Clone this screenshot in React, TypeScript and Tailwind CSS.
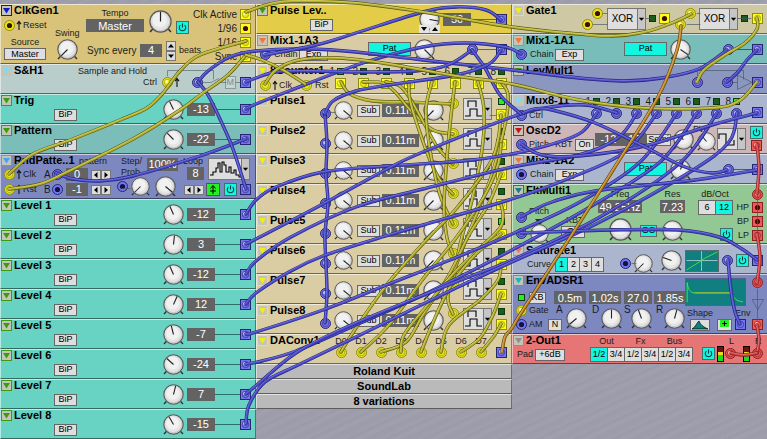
import type { ReactNode } from "react";
import clsx from "clsx";

type Point = [number, number];
type Tone = "yellow" | "blue" | "red";

const JACK = {
    yellow: { fill: "#e9e61a", edge: "#8f8d10", ring: "#ffff12", hole: "#3f0d0d", shine: "#fbfaa8" },
    blue: { fill: "#7474f2", edge: "#26266e", ring: "#7474f2", hole: "#12123c", shine: "#c3c3ff" },
    red: { fill: "#ea5555", edge: "#8c1f1f", ring: "#ee5a5a", hole: "#3f0d0d", shine: "#ffc0c0" },
};

function Jack({ tone = "blue", round, open, className }: { tone?: Tone; round?: boolean; open?: boolean; className?: string }) {
    const c = JACK[tone];
    return (
        <svg viewBox="0 0 11 11" className={clsx("size-[11px] shrink-0 overflow-visible", className)}>
            {round ? (
                <circle cx="5.5" cy="5.5" r="5" fill={c.fill} stroke={c.edge} />
            ) : (
                <rect x="0.5" y="0.5" width="10" height="10" fill={c.ring} stroke={c.edge} />
            )}
            {open ? (
                <circle cx="5.5" cy="5.5" r="2.6" fill={c.hole} />
            ) : (
                <>
                    <circle cx="5.5" cy="5.5" r="3.2" fill={c.fill} stroke={c.edge} strokeWidth="0.6" />
                    <circle cx="4.6" cy="4.6" r="1.5" fill={c.shine} />
                </>
            )}
        </svg>
    );
}

function Knob({ angle, label, big, small, className }: { angle: number; label: string; big?: boolean; small?: boolean; className?: string }) {
    return (
        <label className={clsx("block shrink-0", big ? "size-[23px]" : small ? "size-[19px]" : "size-[21px]", className)}>
            <input type="range" min={-135} max={135} defaultValue={angle} aria-label={label} className="sr-only" />
            <svg viewBox="0 0 21 21" className="size-full overflow-visible">
                <path d="M3.6 17.2 1 20M17.4 17.2 20 20" stroke="#333" strokeWidth="1.4" />
                <circle cx="10.5" cy="10.5" r="9.7" fill="#c9c9c9" stroke="#5a5856" strokeWidth="1.1" />
                <circle cx="10.2" cy="10" r="8.3" fill="#e4e4e4" />
                <circle cx="9.8" cy="9.2" r="6.4" fill="#f1f1f1" />
                <path d="M10.5 10.5V1.5" stroke="#222" strokeWidth="1.1" transform={`rotate(${angle} 10.5 10.5)`} />
            </svg>
        </label>
    );
}

function Text({ children, className }: { children: ReactNode; className?: string }) {
    return <span className={clsx("shrink-0 text-[9px] leading-[11px] whitespace-nowrap text-[#1c1c1c]", className)}>{children}</span>;
}

function Value({ children, className }: { children: ReactNode; className?: string }) {
    return (
        <output className={clsx("h-[13px] shrink-0 bg-[#636363] text-center text-[11px] leading-[13px] whitespace-nowrap text-white", className)}>
            {children}
        </output>
    );
}

function Btn({ children, on, className }: { children: ReactNode; on?: boolean; className?: string }) {
    return (
        <button
            className={clsx(
                "flex h-3 shrink-0 items-center justify-center border border-[#666] text-[9px] leading-[9px] whitespace-nowrap text-black",
                on ? "bg-[#14f5e0]" : "bg-[#dedede]",
                className,
            )}
        >
            {children}
        </button>
    );
}

function Power({ className }: { className?: string }) {
    return (
        <button aria-label="Bypass" className={clsx("size-[13px] shrink-0 border border-[#3f6f6f] bg-[#14f5e0]", className)}>
            <svg viewBox="0 0 11 11" className="size-[11px]" fill="none" stroke="#063c3c" strokeWidth="1.1">
                <path d="M3.4 3.2a3.2 3.2 0 1 0 4.2 0M5.5 1.5v4" />
            </svg>
        </button>
    );
}

function Arrows({ vertical, className }: { vertical?: boolean; className?: string }) {
    const paths = vertical ? ["M2 6.5h6L5 3z", "M2 3.5h6L5 7z"] : ["M6.5 2v6L3 5z", "M3.5 2v6L7 5z"];
    return (
        <div className={clsx("flex shrink-0", vertical && "flex-col", className)}>
            {paths.map((d, i) => (
                <button key={d} aria-label={i ? "Next" : "Previous"} className="size-[10px] border border-[#777] bg-[#dcdcdc]">
                    <svg viewBox="1 1 8 8" className="size-2"><path d={d} /></svg>
                </button>
            ))}
        </div>
    );
}

function Led({ on, className }: { on?: boolean; className?: string }) {
    return <span className={clsx("size-[7px] shrink-0 border border-[#0c3a0c]", on ? "bg-[#22f022]" : "bg-[#1d5c1d]", className)} />;
}

function UpArrow() {
    return (
        <svg viewBox="0 0 6 11" className="mx-px h-[11px] w-1.5 shrink-0">
            <path d="M3 10V2M1 4.2 3 1.5l2 2.7" fill="none" stroke="#111" strokeWidth="1.1" />
        </svg>
    );
}

function DropArrow({ className }: { className?: string }) {
    return (
        <svg viewBox="0 0 8 20" className={clsx("h-5 w-2 shrink-0 border-l border-[#777] bg-[#c6c6c6]", className)}>
            <path d="M1 8.5h6L4 12z" />
        </svg>
    );
}

function Wave({ d, label, wide }: { d: string; label: string; wide?: boolean }) {
    return (
        <button aria-label={label} className={clsx("flex h-[22px] border border-[#777] bg-[#dedede]", wide ? "w-[42px]" : "w-[29px]")}>
            <svg viewBox={wide ? "0 0 32 20" : "0 0 19 20"} className="h-5 min-w-0 flex-1" fill="none" stroke="#000" strokeWidth="1.1">
                <path d={d} />
            </svg>
            <DropArrow />
        </button>
    );
}

// every direct child is a layer in one grid cell, set off by its own margins
function Module({ title, color, mark, className, children }: { title: string; color: string; mark: string; className?: string; children: ReactNode }) {
    return (
        <section className={clsx("grid border border-t-white/60 border-r-black/40 border-b-black/50 border-l-white/50 *:[grid-area:1/1]", color, className ?? "h-[30px]")}>
            <div className="flex h-3 gap-0.5 self-start">
                <button aria-label={`${title} menu`} className={clsx("size-[11px] shrink-0 border border-current bg-[#c4c4b8]", mark)}>
                    <svg viewBox="0 0 9 9" className="size-[9px]"><path d="M1 2h7L4.5 7.5z" fill="currentColor" /></svg>
                </button>
                <h2 className="text-[11px] leading-[11px] font-bold whitespace-nowrap text-black">{title}</h2>
            </div>
            {children}
        </section>
    );
}

function Row({ className, children }: { className?: string; children: ReactNode }) {
    return <div className={clsx("flex h-[11px] items-center self-start", className)}>{children}</div>;
}

function Level({ name, value, color = "bg-[#68d2c3]" }: { name: string; value: number; color?: string }) {
    return (
        <Module title={name} color={color} mark="text-[#3f9a12]">
            <Row className="mt-3.5 ml-[53px]"><Btn className="w-[23px]">BiP</Btn></Row>
            <Row className="mt-[9px] ml-[162px] pr-1">
                <Knob angle={value * 2} label={name} />
                <Value className="ml-[3px] w-7">{value}</Value>
                <span className="h-px flex-1 bg-[#2c6f68]" />
                <Jack />
            </Row>
        </Module>
    );
}

function Mix({ name, color, angle, open }: { name: string; color: string; angle: number; open?: boolean }) {
    return (
        <Module title={name} color={color} mark="text-[#f2763c]">
            <Row className="mt-3.5 ml-[3px]">
                <Jack round open={open} />
                <Text className="ml-[3px] w-[25px]">Chain</Text>
                <Btn className="w-[29px]">Exp</Btn>
            </Row>
            <Row className="mt-2 ml-[111px]"><Btn on className="h-[14px] w-[43px]">Pat</Btn></Row>
            <Row className="mt-[9px] ml-[157px] pr-1">
                <Knob angle={angle} label={`${name} level`} />
                <Jack round className="ml-8" />
                <span className="h-px flex-1 bg-black/50" />
                <Jack />
            </Row>
        </Module>
    );
}

function Pulse({ n }: { n: number }) {
    return (
        <Module title={`Pulse${n}`} color="bg-[#dbcda3]" mark="text-[#f5ee10]">
            <Row className="mt-[13px] ml-[63px]"><Jack round /></Row>
            <Row className="mt-[10px] ml-[77px]">
                <Knob small angle={130} label={`Pulse ${n} modulation`} />
                <Btn className="ml-1 w-[23px]">Sub</Btn>
                <Value className="ml-0.5 w-[37px]">0.11m</Value>
                <Knob angle={-135} label={`Pulse ${n} time`} className="ml-1" />
            </Row>
            <Row className="mt-[3px] ml-[191px]"><Jack tone="yellow" round /></Row>
            <div className="mt-[3px] ml-[206px] self-start">
                <Wave label="Pulse mode" d="M1 17h5V10h7v7h5M4 8V2h8v6" />
            </div>
            <div className="mt-[3px] flex flex-col items-center gap-1 justify-self-end pr-1">
                <Led on={n === 1 || n === 5} />
                <Jack tone="yellow" />
            </div>
        </Module>
    );
}

function Gate() {
    return (
        <label className="flex h-[22px] w-[39px] shrink-0 border border-[#777] bg-[#dedede]">
            <select aria-label="Gate type" defaultValue="XOR" className="w-[29px] appearance-none text-center text-[10px] leading-5">
                <option>XOR</option>
            </select>
            <DropArrow />
        </label>
    );
}

function Choice({ items, on, width }: { items: string[]; on: number; width: string }) {
    return (
        <div className="flex">
            {items.map((item, i) => (
                <Btn key={item} on={i === on} className={clsx("-mr-px h-[15px]", width)}>{item}</Btn>
            ))}
        </div>
    );
}

function Meter({ className }: { className?: string }) {
    return (
        <div className={clsx("flex h-4 w-[7px] shrink-0 flex-col border border-black bg-[#1cdd1c]", className)}>
            <span className="h-[5px] bg-[#6b1313]" />
            <span className="h-[3px] bg-[#e5df1a]" />
        </div>
    );
}

function EnvCell({ letter, angle, value, width, inset }: { letter: string; angle: number; value: string; width: string; inset: string }) {
    return (
        <div>
            <Value className={clsx("block h-3.5 leading-[14px]", width)}>{value}</Value>
            <div className="flex items-start">
                <Text className={clsx("text-[10px]", inset)}>{letter}</Text>
                <Knob angle={angle} label={`Envelope ${letter}`} className="mt-1" />
            </div>
        </div>
    );
}

function ColumnOne() {
    return (
        <div>
            <Module title="ClkGen1" color="bg-[#d9c37a]" mark="text-[#1414c8]" className="h-[60px]">
                <Row className="mt-[15px] ml-[3px]">
                    <Jack tone="yellow" round open />
                    <UpArrow />
                    <Text>Reset</Text>
                </Row>
                <div className="mt-8 ml-[3px] w-[42px] self-start text-center">
                    <Text className="block">Source</Text>
                    <Btn className="w-full">Master</Btn>
                </div>
                <div className="mt-[23px] ml-[54px] w-6 self-start">
                    <Text className="block">Swing</Text>
                    <Knob angle={-135} label="Swing" className="ml-0.5" />
                </div>
                <div className="mt-[3px] ml-[85px] w-[58px] self-start text-center">
                    <Text className="block">Tempo</Text>
                    <Value className="block h-3.5 leading-[14px]">Master</Value>
                </div>
                <div className="mt-[5px] ml-[148px] flex self-start">
                    <Knob big angle={0} label="Tempo" />
                    <Power className="mt-[11px] ml-1" />
                </div>
                <Row className="mt-10 ml-[86px]">
                    <Text className="w-[53px] text-[10px]">Sync every</Text>
                    <Value className="w-[22px]">4</Value>
                    <Arrows vertical className="ml-1" />
                    <Text className="ml-[3px]">beats</Text>
                </Row>
                <div className="flex flex-col justify-self-end pt-0.5 pr-1">
                    {["Clk Active", "1/96", "1/16", "Sync"].map((name, i) => (
                        <div key={name} className="flex h-3.5 items-center justify-end gap-[3px]">
                            <Text className="text-[10px]">{name}</Text>
                            <Jack tone="yellow" open={i === 1} />
                        </div>
                    ))}
                </div>
            </Module>
            <Module title="S&H1" color="bg-[#b9cdcb]" mark="text-[#7fdcf5]">
                <Row className="mt-px ml-[77px]"><Text>Sample and Hold</Text></Row>
                <Row className="mt-3 ml-[142px] pr-1">
                    <Text className="w-[19px]">Ctrl</Text>
                    <Jack tone="yellow" round />
                    <UpArrow />
                    <Jack round className="ml-[11px]" />
                    <Text className="mr-1 ml-auto border border-[#8b9b9a] bg-[#c6d6d4] px-px text-[8px] leading-[9px] text-[#7d8b8a]">M</Text>
                    <Jack />
                </Row>
            </Module>
            <Level name="Trig" value={-13} />
            <Level name="Pattern" value={-22} color="bg-[#7bbdb9]" />
            <Module title="RndPatte..1" color="bg-[#7d88c1]" mark="text-[#3fa5f0]" className="h-[45px]">
                <Row className="mt-px ml-[78px]"><Text>pattern</Text></Row>
                <Row className="mt-3.5 ml-[3px]">
                    <Jack tone="yellow" round />
                    <UpArrow />
                    <Text className="w-[21px]">Clk</Text>
                    <Text className="w-[8px] text-[10px]">A</Text>
                    <Jack round />
                    <Value className="ml-[3px] w-[22px]">0</Value>
                    <Arrows className="ml-[3px]" />
                </Row>
                <Row className="mt-[29px] ml-[3px]">
                    <Jack tone="yellow" round />
                    <UpArrow />
                    <Text className="w-[21px]">Rst</Text>
                    <Text className="w-[8px] text-[10px]">B</Text>
                    <Jack round open />
                    <Value className="ml-[3px] w-[22px]">-1</Value>
                    <Arrows className="ml-[3px]" />
                </Row>
                <div className="mt-px ml-[120px] w-7 self-start">
                    <Text className="block leading-[9px]">Step/</Text>
                    <Text className="block leading-[9px]">Prob</Text>
                </div>
                <Row className="mt-1 ml-[146px]"><Value className="w-[31px]">100%</Value></Row>
                <Row className="mt-[26px] ml-[116px]">
                    <Jack round open />
                    <Knob small angle={-135} label="Step" className="ml-[3px]" />
                    <Knob angle={130} label="Probability" className="ml-[5px]" />
                </Row>
                <Row className="mt-px ml-[182px]"><Text>Loop</Text></Row>
                <Row className="mt-[13px] ml-[186px]"><Value className="w-[17px]">8</Value></Row>
                <div className="mt-[3px] ml-[207px] self-start">
                    <Wave wide label="Pattern shape" d="M1 16h3v-3h3V9h2V4h2v9h2V3h2v3h2v7h3v-5h2v6h3v-3h2v5h3v2h3" />
                </div>
                <Row className="mt-[29px] ml-[183px] pr-1">
                    <Arrows />
                    <button aria-label="Unipolar" className="ml-0.5 h-[13px] w-3.5 border border-[#555] bg-[#22f022]">
                        <svg viewBox="0 0 12 11" className="h-[11px] w-3"><path d="M6 10V2M3.5 4.5 6 1.5l2.5 3M3 7h6" fill="none" stroke="#000" /></svg>
                    </button>
                    <Power className="ml-1" />
                    <Jack className="ml-auto" />
                </Row>
            </Module>
            {[-12, 3, -12, 12, -7, -24, 7, -15].map((value, i) => (
                <Level key={i} name={`Level ${i + 1}`} value={value} />
            ))}
        </div>
    );
}

function ColumnTwo() {
    return (
        <div>
            <Module title="Pulse Lev.." color="bg-[#e3cc47]" mark="text-[#3f9a12]">
                <Row className="mt-3.5 ml-[53px]"><Btn className="w-[23px]">BiP</Btn></Row>
                <Row className="mt-[9px] ml-[162px] pr-1">
                    <Knob angle={100} label="Pulse level" />
                    <Value className="ml-[3px] w-7">50</Value>
                    <span className="h-px flex-1 bg-[#6f6a2c]" />
                    <Jack />
                </Row>
                <div className="mt-5 ml-[162px] flex self-start">
                    <button aria-label="Decrease" className="h-2 w-[10px] bg-[#e4e4e4]"><svg viewBox="0 0 10 8"><path d="M2 2h6L5 6z" /></svg></button>
                    <button aria-label="Increase" className="ml-px h-2 w-[10px] bg-[#e4e4e4]"><svg viewBox="0 0 10 8"><path d="M2 6h6L5 2z" /></svg></button>
                </div>
            </Module>
            <Mix name="Mix1-1A3" color="bg-[#d9cba4]" angle={135} />
            <Module title="8Counter1" color="bg-[#dbcda3]" mark="text-[#f5ee10]">
                <Row className="mt-[15px] ml-[3px]">
                    <Jack tone="yellow" round />
                    <UpArrow />
                    <Text className="w-[21px]">Clk</Text>
                    <Jack tone="yellow" round className="ml-px" />
                    <Text className="ml-[3px]">Rst</Text>
                </Row>
                <div className="flex justify-self-end pt-px pr-1">
                    {[1, 2, 3, 4, 5, 6, 7, 8].map((n) => (
                        <div key={n} className="flex w-[23px] flex-col items-end gap-px">
                            <div className="flex items-center pr-0.5"><Text className="text-[10px]">{n}</Text><Led on={n === 1} className="ml-0.5" /></div>
                            <Jack tone="yellow" />
                        </div>
                    ))}
                </div>
            </Module>
            {[1, 2, 3, 4, 5, 6, 7, 8].map((n) => <Pulse key={n} n={n} />)}
            <Module title="DAConv1" color="bg-[#dbcda3]" mark="text-[#f5ee10]">
                <div className="mt-px ml-[74px] flex self-start">
                    {[0, 1, 2, 3, 4, 5, 6, 7].map((n) => (
                        <div key={n} className="flex w-5 flex-col items-center">
                            <Text>D{n}</Text>
                            <Jack tone="yellow" round />
                        </div>
                    ))}
                </div>
                <Row className="mt-3 justify-self-end pr-1"><Jack /></Row>
            </Module>
            {["Roland Kuit", "SoundLab", "8 variations"].map((line) => (
                <p key={line} className="h-[15px] border border-t-white/60 border-r-black/40 border-b-black/50 border-l-white/50 bg-[#bababa] text-center text-[11px] leading-[13px] font-bold">{line}</p>
            ))}
        </div>
    );
}

function ColumnThree() {
    return (
        <div>
            <Module title="Gate1" color="bg-[#cfc8a5]" mark="text-[#f5ee10]">
                <Row className="mt-[3px] ml-[79px]"><Jack tone="yellow" round open /></Row>
                <Row className="mt-3.5 ml-[69px]"><Jack tone="yellow" round open /></Row>
                <Row className="mt-[3px] ml-[172px]"><Jack tone="yellow" round /></Row>
                <Row className="mt-3.5 ml-[162px]"><Jack tone="yellow" round /></Row>
                <Row className="mt-2 ml-[94px] pr-1">
                    <Gate />
                    <Led className="ml-[3px]" />
                    <Jack tone="yellow" open className="ml-[3px]" />
                    <span className="w-[29px]" />
                    <Gate />
                    <Led className="ml-[3px]" />
                    <Jack tone="yellow" className="ml-auto" />
                </Row>
            </Module>
            <Mix name="Mix1-1A1" color="bg-[#78bdb9]" angle={125} />
            <Module title="LevMult1" color="bg-[#8c97bf]" mark="text-[#3f9a12]">
                <Row className="mt-3 ml-[179px] pr-1">
                    <Jack round />
                    <Jack round className="ml-[19px]" />
                    <Jack className="ml-auto" />
                </Row>
            </Module>
            <Module title="Mux8-11" color="bg-[#abb6ce]" mark="text-[#7fdcf5]">
                <Row className="mt-[15px] ml-[3px]"><Jack round /><Text className="ml-0.5">Ctrl</Text></Row>
                <div className="mt-px ml-[69px] flex self-start">
                    {[1, 2, 3, 4, 5, 6, 7, 8].map((n) => (
                        <div key={n} className="flex w-5 flex-col items-end gap-px">
                            <div className="flex items-center pr-0.5"><Text className="text-[10px]">{n}</Text><Led on={n === 8} className="ml-0.5" /></div>
                            <Jack round />
                        </div>
                    ))}
                </div>
                <Row className="mt-3 justify-self-end pr-1"><Jack /></Row>
            </Module>
            <Module title="OscD2" color="bg-[#cdb6b8]" mark="text-[#c81414]">
                <Row className="mt-3.5 ml-[3px]">
                    <Jack round />
                    <Text className="ml-0.5 w-[26px]">Pitch</Text>
                    <Text className="w-5">KBT</Text>
                    <Btn className="w-[19px]">On</Btn>
                </Row>
                <Row className="mt-[9px] ml-[82px]">
                    <Value className="w-[27px]">-12</Value>
                    <Value className="w-6">12</Value>
                    <Btn className="w-[25px]">Semi</Btn>
                    <Knob angle={-60} label="Coarse" className="ml-0.5" />
                </Row>
                <Row className="-mt-px ml-[180px]"><Text>PW</Text></Row>
                <Row className="mt-[11px] ml-[184px]"><Knob small angle={-40} label="Pulse width" /></Row>
                <div className="mt-[3px] ml-[204px] self-start"><Wave label="Waveform" d="M1 10V5h7v11h8v-5" /></div>
                <div className="mt-px flex flex-col items-center gap-px justify-self-end pr-1">
                    <Power />
                    <Jack tone="red" />
                </div>
            </Module>
            <Mix name="Mix1-1A2" color="bg-[#abb6ce]" angle={20} open />
            <Module title="FltMulti1" color="bg-[#93c794]" mark="text-[#12837b]" className="h-[60px]">
                <Row className="mt-[21px] ml-4"><Text>Pitch</Text></Row>
                <Row className="mt-[27px] ml-[3px]">
                    <Jack round />
                    <svg viewBox="0 0 10 6" className="mt-2 ml-2 h-1.5 w-2.5"><path d="M0 0h10L5 6z" fill="#123c12" /></svg>
                </Row>
                <Row className="mt-[43px] ml-[3px]">
                    <Jack round />
                    <Knob small angle={-70} label="Pitch modulation" className="ml-[3px]" />
                </Row>
                <Row className="mt-[30px] ml-[53px]"><Text>KBT</Text></Row>
                <Row className="mt-[41px] ml-12"><Btn className="w-6">Off</Btn></Row>
                <div className="mt-1 ml-[85px] w-11 self-start text-center">
                    <Text className="block">Freq</Text>
                    <Value className="block h-3.5 leading-[14px]">49.25Hz</Value>
                </div>
                <Row className="mt-[39px] ml-[96px]"><Knob big angle={-85} label="Frequency" /></Row>
                <Row className="mt-10 ml-[127px]"><Btn on className="w-[17px]">GC</Btn></Row>
                <div className="mt-1 ml-[147px] w-[25px] self-start text-center">
                    <Text className="block">Res</Text>
                    <Value className="block h-3.5 leading-[14px]">7.23</Value>
                </div>
                <Row className="mt-10 ml-[149px]"><Knob angle={-70} label="Resonance" /></Row>
                <div className="mt-1 ml-[185px] w-[34px] self-start text-center">
                    <Text className="block">dB/Oct</Text>
                    <Choice items={["6", "12"]} on={1} width="w-[18px]" />
                </div>
                <Row className="mt-11 ml-[207px]"><Power /></Row>
                <div className="mt-1 flex flex-col items-end justify-self-end pr-1">
                    <Jack tone="red" round />
                    {["HP", "BP", "LP"].map((name, i) => (
                        <div key={name} className="flex h-3.5 items-center gap-[3px]">
                            <Text>{name}</Text>
                            <Jack tone="red" open={i < 2} />
                        </div>
                    ))}
                </div>
            </Module>
            <Module title="Saturate1" color="bg-[#abb6ce]" mark="text-[#ea7373]">
                <Row className="mt-3.5 ml-3.5">
                    <Text className="w-7">Curve</Text>
                    <Choice items={["1", "2", "3", "4"]} on={0} width="w-[13px]" />
                </Row>
                <Row className="mt-[13px] ml-[107px]">
                    <Jack round open />
                    <Knob small angle={-135} label="Amount modulation" className="ml-[3px]" />
                </Row>
                <Row className="mt-[10px] ml-[148px] pr-1">
                    <Knob angle={-70} label="Amount" />
                    <svg viewBox="0 0 34 22" className="ml-[3px] h-[22px] w-[34px] shrink-0 border border-[#5a6a70] bg-[#0f7f7f]">
                        <path d="M0 10.5h34M16.5 0v22" stroke="#a9c9c9" />
                        <path d="M0 21 14 12l6-4L34 1" fill="none" stroke="#3cf03c" />
                    </svg>
                    <Jack round className="ml-[3px]" />
                    <Power className="ml-[3px]" />
                    <Jack className="ml-auto" />
                </Row>
            </Module>
            <Module title="EnvADSR1" color="bg-[#7d88c1]" mark="text-[#17b8ae]" className="h-[60px]">
                <Row className="mt-[17px] ml-[5px]"><Led on /><Btn className="ml-1 w-[17px]">KB</Btn></Row>
                <Row className="mt-[30px] ml-[3px]"><Jack tone="yellow" round /><Text className="ml-0.5">Gate</Text></Row>
                <Row className="mt-11 ml-[3px]">
                    <Jack round open />
                    <Text className="ml-0.5 w-[19px]">AM</Text>
                    <Btn className="w-3.5">N</Btn>
                </Row>
                <div className="mt-4 ml-[41px] flex gap-0.5 self-start">
                    <EnvCell letter="A" angle={-130} value="0.5m" width="w-8" inset="w-3 pl-0.5" />
                    <EnvCell letter="D" angle={0} value="1.02s" width="w-8" inset="w-3 pl-[3px]" />
                    <EnvCell letter="S" angle={-20} value="27.0" width="w-7" inset="w-[7px]" />
                    <EnvCell letter="R" angle={15} value="1.85s" width="w-8" inset="w-2.5 pl-0.5" />
                </div>
                <svg viewBox="0 0 61 28" className="mt-[3px] ml-[172px] h-7 w-[61px] self-start border border-[#55608a] bg-[#0f7f7f]">
                    <path d="M0 25V4c1 7 3 11 8 11" fill="none" stroke="#3cf03c" />
                    <path d="M8 15h40" stroke="#e9e61a" />
                    <path d="M48 15c2 6 5 9 12 9.500" fill="none" stroke="#3cf03c" />
                </svg>
                <Row className="mt-[33px] ml-[174px]"><Text className="w-12">Shape</Text><Text>Env</Text></Row>
                <Row className="mt-11 ml-[177px] pr-1">
                    <button aria-label="Envelope shape" className="h-3 w-5 border border-[#666] bg-[#dedede]">
                        <svg viewBox="0 0 18 10" className="h-2.5 w-[18px]"><path d="M1 9C5 7 6 2 8 1c1 3 4 6 9 8z" fill="#0f7f7f" stroke="#000" strokeWidth=".7" /></svg>
                    </button>
                    <button aria-label="Envelope polarity" className="ml-[7px] h-3 w-[15px] border border-[#666] bg-[#dedede]">
                        <svg viewBox="0 0 13 10" className="h-2.5 w-[13px]"><path d="M2 0h9v7H2z" fill="#22f022" /><path d="M6.500 6V1M4 3.500h5" stroke="#000" /></svg>
                    </button>
                    <Jack className="ml-[3px]" />
                    <Jack tone="red" className="ml-auto" />
                </Row>
                <Row className="mt-0.5 justify-self-end pr-1"><Jack tone="red" round /></Row>
            </Module>
            <Module title="2-Out1" color="bg-[#e57675]" mark="text-[#8f8f8f]">
                <Row className="mt-3.5 ml-1"><Text className="w-[18px]">Pad</Text><Btn className="w-[30px]">+6dB</Btn></Row>
                <div className="mt-px ml-[77px] flex gap-px self-start text-center">
                    {["Out", "Fx", "Bus"].map((name, i) => (
                        <div key={name} className="w-[33px]">
                            <Text className="block">{name}</Text>
                            <Choice items={["1/2", "3/4"]} on={i ? -1 : 0} width="w-[18px]" />
                        </div>
                    ))}
                </div>
                <Row className="mt-px ml-[216px]"><Text className="w-[26px]">L</Text><Text>R</Text></Row>
                <Row className="mt-[13px] ml-[189px] pr-1">
                    <Power />
                    <Meter className="ml-0.5" />
                    <Jack tone="red" round className="ml-px" />
                    <Meter className="ml-[7px]" />
                    <Jack tone="red" round className="ml-auto" />
                </Row>
            </Module>
        </div>
    );
}

const CABLE = {
    yellow: ["#5c5a12", "#b0ad30", "#dcd965"],
    blue: ["#27277f", "#4747c4", "#7c7cea"],
    red: ["#7d2222", "#cf4040", "#f08080"],
    orange: ["#5f4210", "#bd8426", "#e6b860"],
};

const CABLES: [keyof typeof CABLE, Point[]][] = [
    ["yellow", [[341, 82], [350, 94], [373, 101], [406, 102], [453, 104]]],
    ["yellow", [[363, 82], [383, 83], [396, 93], [412, 112], [433, 130], [453, 134]]],
    ["yellow", [[386, 82], [400, 86], [411, 100], [425, 125], [438, 148], [453, 164]]],
    ["yellow", [[409, 82], [410, 100], [419, 130], [430, 160], [440, 180], [453, 194]]],
    ["yellow", [[432, 82], [426, 110], [430, 150], [440, 195], [453, 224]]],
    ["yellow", [[455, 82], [450, 125], [446, 170], [444, 210], [447, 238], [453, 254]]],
    ["yellow", [[478, 82], [484, 110], [482, 150], [472, 200], [460, 245], [453, 284]]],
    ["yellow", [[501, 82], [508, 95], [505, 125], [490, 180], [466, 240], [451, 280], [448, 300], [453, 314]]],
    ["yellow", [[501, 115], [498, 140], [489, 165], [456, 209], [431, 235], [389, 282], [356, 328], [341, 352]]],
    ["yellow", [[501, 144], [498, 165], [485, 195], [456, 238], [423, 279], [389, 325], [361, 352]]],
    ["yellow", [[501, 174], [488, 205], [469, 235], [449, 275], [423, 315], [406, 342], [381, 352]]],
    ["yellow", [[501, 204], [503, 215], [500, 228], [480, 248], [453, 274], [425, 308], [404, 335], [401, 352]]],
    ["yellow", [[501, 234], [475, 255], [450, 287], [432, 325], [421, 352]]],
    ["yellow", [[501, 264], [498, 280], [480, 300], [449, 325], [441, 352]]],
    ["yellow", [[501, 294], [493, 315], [480, 338], [461, 352]]],
    ["yellow", [[501, 324], [494, 336], [481, 352]]],
    ["blue", [[325, 114], [327, 144], [326, 174], [328, 204], [325, 234], [326, 264], [327, 294], [325, 323]]],
    ["blue", [[246, 109], [256, 104], [289, 91], [363, 63], [423, 47], [465, 43], [505, 47], [521, 54]]],
    ["blue", [[246, 139], [200, 156], [133, 176], [100, 181], [73, 179], [56, 173]]],
    ["blue", [[246, 214], [256, 200], [276, 187], [323, 172], [389, 166], [463, 161], [512, 154], [556, 143], [582, 132], [597, 113]]],
    ["blue", [[246, 244], [256, 239], [323, 204], [389, 168], [423, 152], [512, 117], [545, 108], [585, 105], [617, 113]]],
    ["blue", [[246, 274], [256, 261], [291, 237], [356, 207], [423, 189], [512, 167], [579, 155], [618, 138], [637, 113]]],
    ["blue", [[246, 304], [256, 293], [289, 272], [323, 256], [389, 235], [423, 225], [512, 199], [570, 178], [625, 152], [657, 113]]],
    ["blue", [[246, 334], [256, 332], [323, 310], [389, 284], [450, 260], [512, 234], [580, 202], [640, 162], [677, 113]]],
    ["blue", [[246, 364], [262, 361], [296, 351], [356, 325], [423, 295], [512, 250], [590, 207], [660, 162], [697, 113]]],
    ["blue", [[246, 394], [258, 384], [296, 353], [349, 326], [456, 282], [512, 260], [600, 217], [680, 163], [717, 113]]],
    ["blue", [[246, 424], [249, 405], [265, 382], [296, 366], [356, 337], [456, 288], [512, 262], [600, 222], [690, 172], [729, 142], [737, 113]]],
    ["blue", [[757, 113], [712, 125], [645, 146], [579, 156], [542, 155], [521, 144]]],
    ["blue", [[521, 114], [535, 109], [552, 110], [595, 123], [645, 147], [685, 167], [712, 173], [727, 170]]],
    ["blue", [[757, 170], [695, 180], [595, 191], [552, 202], [534, 210], [521, 217]]],
    ["blue", [[521, 233], [612, 230], [679, 230], [719, 237], [742, 249], [757, 260]]],
    ["blue", [[728, 260], [731, 290], [735, 312], [740, 324]]],
    ["blue", [[198, 82], [208, 71], [230, 57], [256, 51], [306, 49], [356, 52], [423, 60], [512, 70], [579, 78], [625, 81], [662, 78], [699, 69], [727, 50]]],
    ["blue", [[198, 82], [208, 95], [220, 119], [233, 149], [246, 189]]],
    ["blue", [[246, 82], [256, 78], [276, 72], [306, 71], [360, 72], [416, 71], [448, 65], [472, 50]]],
    ["blue", [[472, 50], [485, 68], [500, 95], [521, 114]]],
    ["blue", [[501, 20], [486, 10], [456, 7], [423, 12], [356, 33], [316, 45], [265, 55]]],
    ["blue", [[501, 50], [489, 64], [456, 75], [389, 85], [356, 91], [333, 101], [325, 114]]],
    ["blue", [[727, 82], [738, 72], [747, 60], [757, 50]]],
    ["yellow", [[246, 12], [270, 4], [296, 1], [356, 3], [423, 12], [512, 27], [579, 34], [612, 36], [645, 32], [672, 23], [691, 14]]],
    ["yellow", [[246, 41], [200, 55], [180, 71], [163, 93], [147, 108], [120, 120], [73, 139], [33, 154], [9, 174]]],
    ["yellow", [[246, 55], [228, 75], [203, 93], [180, 110], [133, 139], [67, 172], [40, 184], [9, 189]]],
    ["yellow", [[246, 55], [262, 60], [283, 70], [305, 84]]],
    ["yellow", [[265, 84], [276, 70], [299, 60], [339, 58], [389, 64], [456, 76], [512, 84], [579, 100], [645, 108], [712, 108], [739, 101], [757, 82]]],
    ["yellow", [[757, 18], [757, 29], [745, 43], [725, 55], [704, 70], [697, 82]]],
    ["orange", [[681, 26], [677, 50], [658, 97], [613, 170], [573, 233], [523, 310], [512, 328], [505, 337], [502, 352]]],
    ["red", [[757, 145], [759, 168], [757, 193]]],
    ["red", [[757, 234], [760, 258], [757, 283]]],
    ["red", [[757, 325], [759, 340], [757, 353]]],
    ["red", [[757, 353], [744, 355], [731, 353]]],
];

// Catmull-Rom through the points, written as cubic segments
function smooth(points: Point[]) {
    let d = `M${points[0]}`;
    for (let i = 0; i < points.length - 1; i++) {
        const a = points[i - 1] ?? points[i];
        const b = points[i];
        const c = points[i + 1];
        const e = points[i + 2] ?? c;
        d += `C${b[0] + (c[0] - a[0]) / 6},${b[1] + (c[1] - a[1]) / 6} ${c[0] - (e[0] - b[0]) / 6},${c[1] - (e[1] - b[1]) / 6} ${c}`;
    }
    return d;
}

function Cables() {
    return (
        <svg viewBox="0 0 768 439" preserveAspectRatio="none" className="pointer-events-none absolute inset-x-0 top-0 h-[439px] w-full" fill="none" strokeLinecap="round">
            <g stroke="#4d5a66">
                <path d="M167.500 76V70.500H213.500V79M203 82.500h8l8-4M220 82.500h6M236 82.500h4" opacity="0.6" />
                <path d="M697.500 76V70.500H743.500V79M733 82.500h4M737.500 75.500v14l14-7zM757.500 151v82M757.500 289v31M752.500 299.500h11l-5.500 10z" opacity="0.7" />
                <path d="M603 13.500h4M593 24.500h14M697 13.500h3M687 24.500h13M646 18.500h4M738 18.500h13M331 112.500h4M490 115.500h6M122 188.500h8M632 263.500h4" opacity="0.7" />
            </g>
            {CABLES.map(([tone, points], i) => {
                const d = smooth(points);
                const [dark, mid, light] = CABLE[tone];
                return (
                    <g key={i}>
                        <path d={d} stroke={dark} strokeWidth="3.4" />
                        <path d={d} stroke={mid} strokeWidth="2.2" />
                        <path d={d} stroke={light} strokeWidth="0.7" transform="translate(-0.3 -0.5)" />
                    </g>
                );
            })}
        </svg>
    );
}

export default function App() {
    return (
        <div className="min-h-screen overflow-hidden bg-[#9c9cab] bg-[repeating-linear-gradient(155deg,#9999a8_0px,#a0a0ae_5px,#9b9baa_9px,#9f9fad_16px)] font-['Liberation_Sans',Arial,sans-serif]">
            <main className="relative grid w-[calc(100%+1px)] grid-cols-3 items-start pt-1">
                <ColumnOne />
                <ColumnTwo />
                <ColumnThree />
                <Cables />
            </main>
        </div>
    );
}
